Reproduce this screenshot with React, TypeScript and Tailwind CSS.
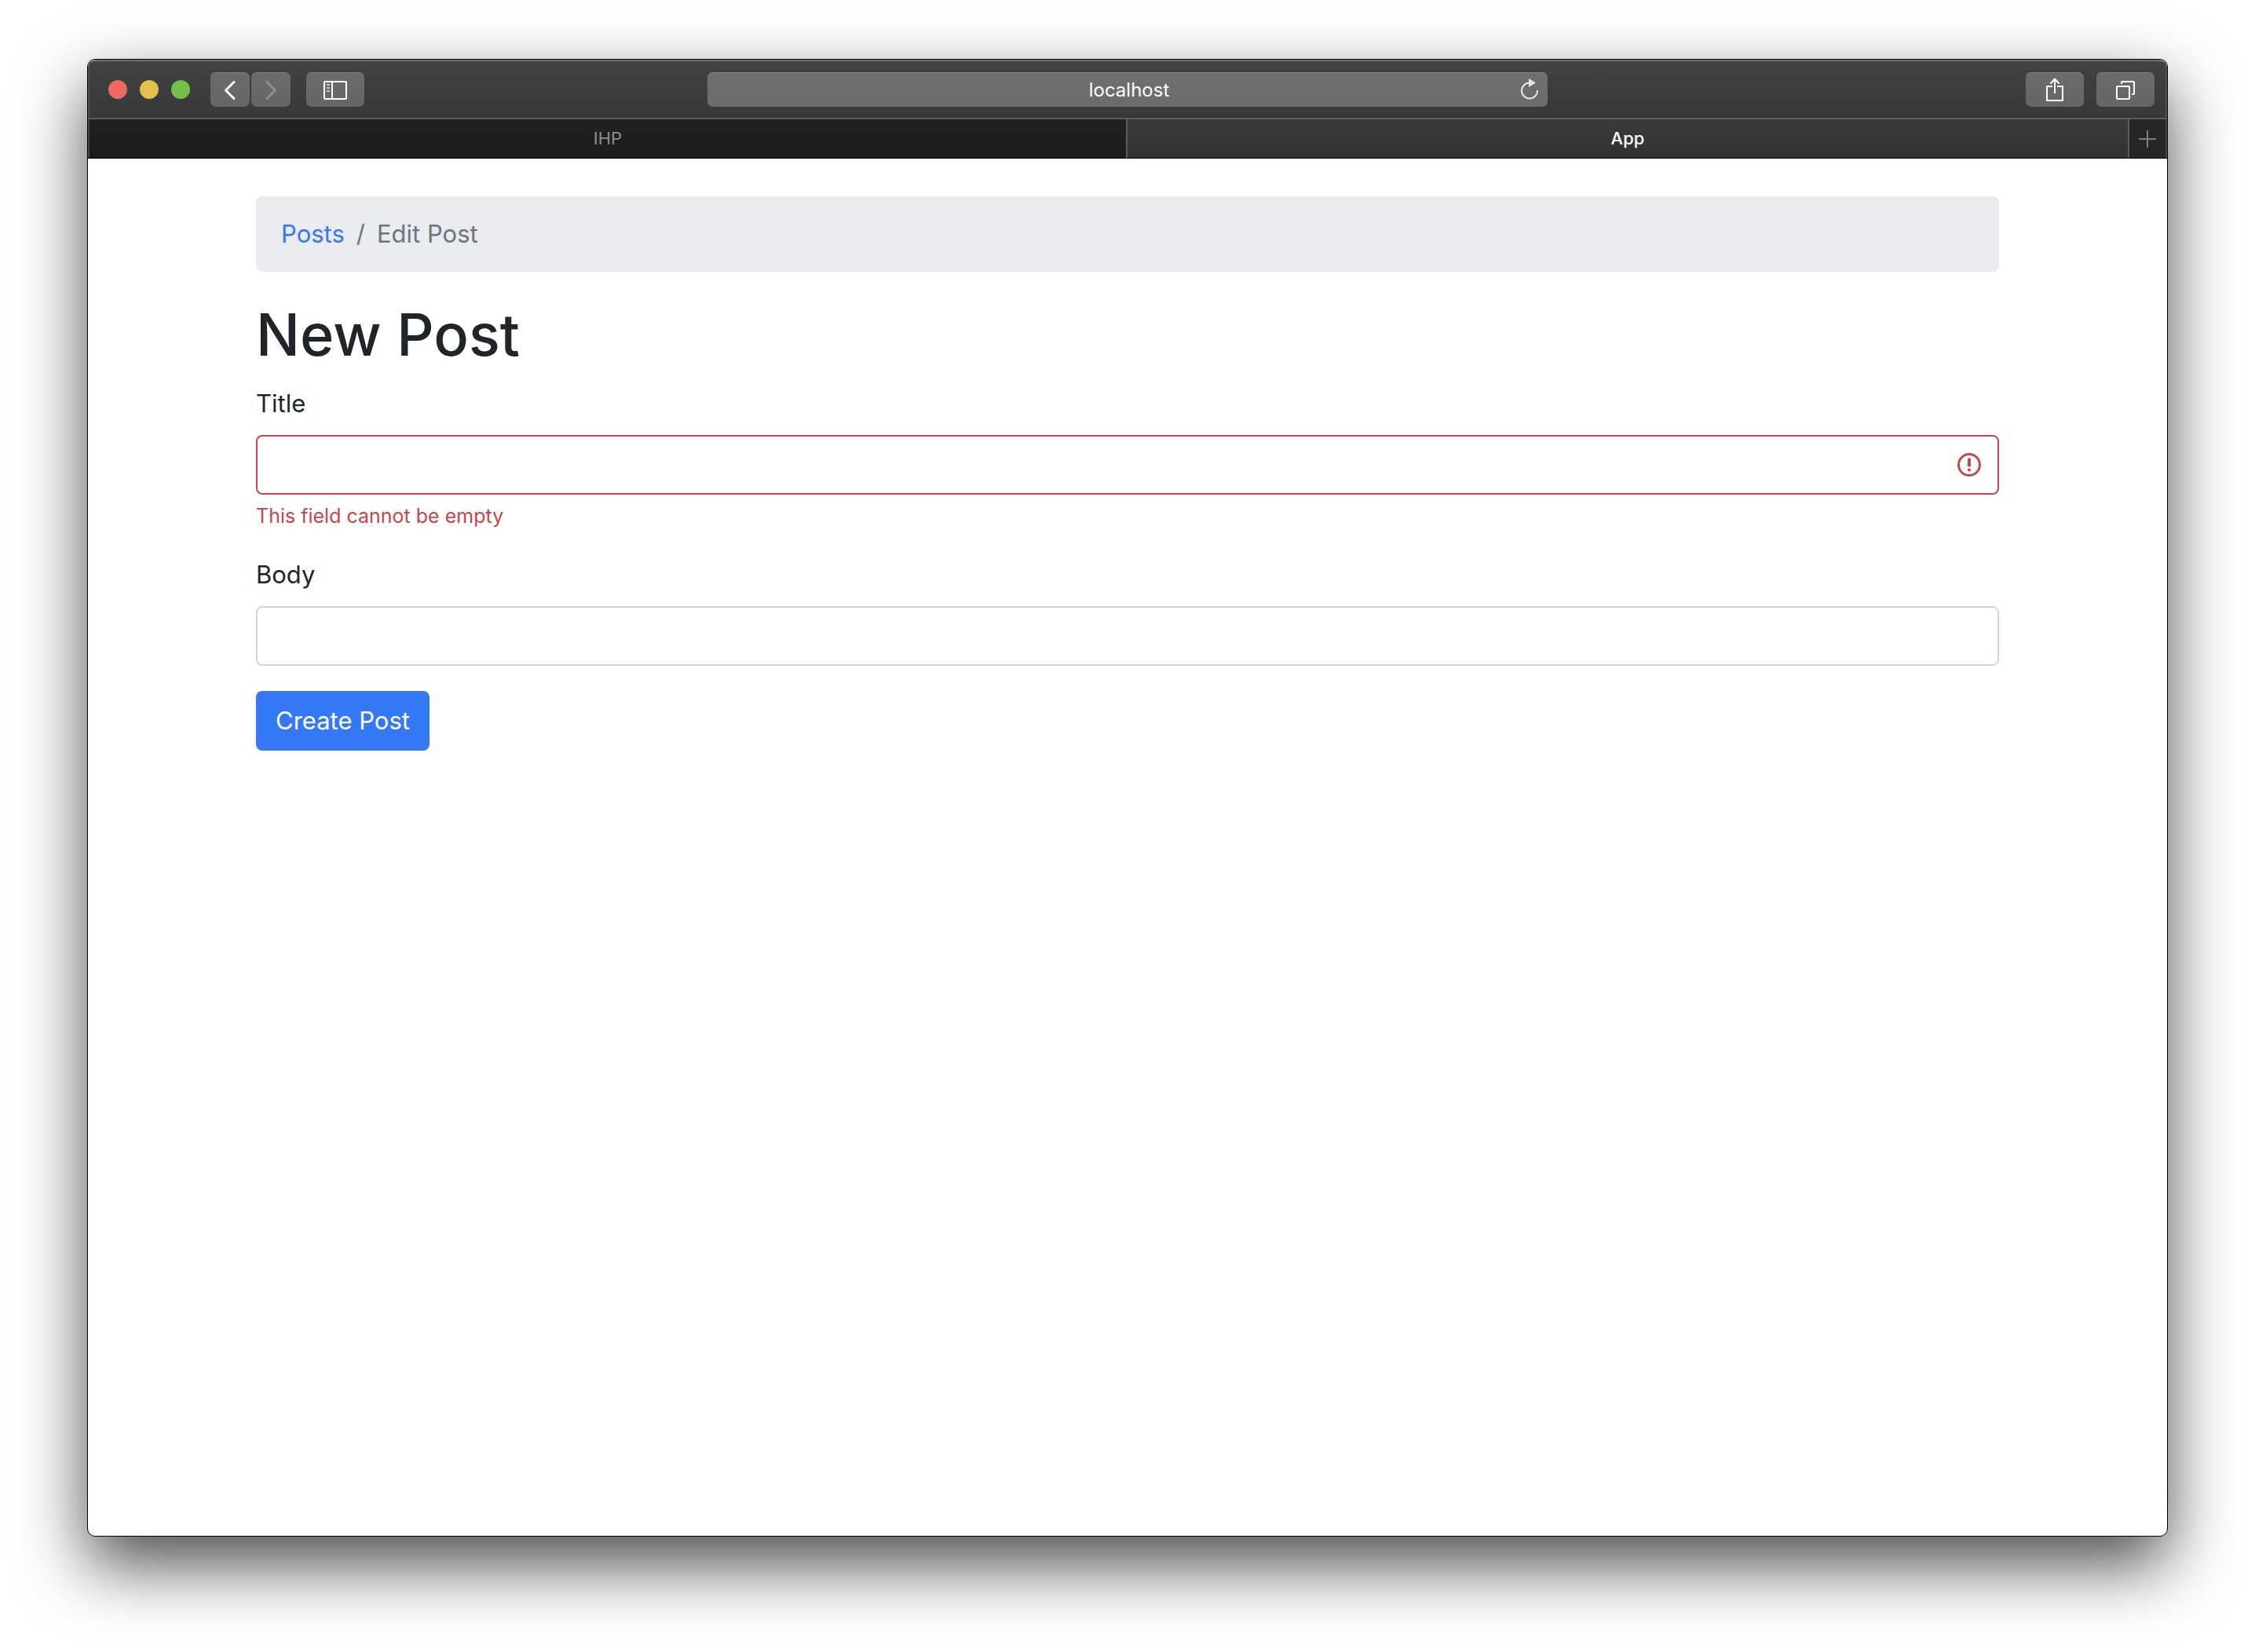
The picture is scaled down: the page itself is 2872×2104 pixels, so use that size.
import React from "react";

function ToolbarButton({
  label,
  className,
  disabled,
  children,
}: {
  label: string;
  className: string;
  disabled?: boolean;
  children: React.ReactNode;
}) {
  return (
    <button
      type="button"
      aria-label={label}
      disabled={disabled}
      className={`flex h-11 items-center justify-center rounded-[7px] border-t border-[#7f8081] bg-linear-to-b from-[#6b6c6e] to-[#646567] text-white ${className}`}
    >
      {children}
    </button>
  );
}

function Toolbar() {
  return (
    <header className="grid h-[76px] grid-cols-[787fr_1070fr_787fr] items-center rounded-t-[9px] border-2 border-x-[#505152] border-t-[#70716f] border-b-[#5a5b5b] bg-linear-to-b from-[#414243] to-[#373839]">
      <div className="flex items-center pl-6">
        <div className="flex gap-4">
          <button type="button" aria-label="Close" className="size-6 rounded-full bg-[#ee695e]" />
          <button type="button" aria-label="Minimize" className="size-6 rounded-full bg-[#e0c04e]" />
          <button type="button" aria-label="Zoom" className="size-6 rounded-full bg-[#74c04a]" />
        </div>
        <div className="ml-[26px] flex gap-0.5">
          <ToolbarButton label="Back" className="w-[50px]">
            <svg width="16" height="26" viewBox="0 0 16 26" fill="none" stroke="currentColor" strokeWidth="3" strokeLinecap="round" strokeLinejoin="round">
              <path d="M13 2.500 2.500 13 13 23.500" />
            </svg>
          </ToolbarButton>
          <ToolbarButton label="Forward" className="w-[50px]" disabled>
            <svg className="text-[#8f9091]" width="16" height="26" viewBox="0 0 16 26" fill="none" stroke="currentColor" strokeWidth="3" strokeLinecap="round" strokeLinejoin="round">
              <path d="M3 2.500 13.500 13 3 23.500" />
            </svg>
          </ToolbarButton>
        </div>
        <ToolbarButton label="Show sidebar" className="ml-5 w-[74px]">
          <svg width="30" height="24" viewBox="0 0 30 24" fill="none" stroke="currentColor" strokeWidth="2">
            <rect x="1" y="1" width="28" height="22" rx="1" />
            <path d="M11 1v22" />
            <path d="M4 5h4M4 9h4M4 13h4" strokeOpacity="0.65" />
          </svg>
        </ToolbarButton>
      </div>

      <div className="relative">
        <input
          type="text"
          aria-label="Address"
          defaultValue="localhost"
          className="h-11 w-full rounded-[7px] border-t border-[#858685] bg-linear-to-b from-[#6f706f] to-[#6a6b6b] pr-12 pl-[52px] text-center text-[24px] text-white outline-none"
        />
        <button type="button" aria-label="Reload" className="absolute inset-y-0 right-3 flex items-center text-[#e6e6e6]">
          <svg width="24" height="28" viewBox="0 0 24 28" fill="none" stroke="currentColor" strokeWidth="2">
            <path d="M13 5.500A10 10 0 1 0 23 15" />
            <path d="M12 0v11l9-5.500z" fill="currentColor" stroke="none" />
          </svg>
        </button>
      </div>

      <div className="flex justify-end gap-4 pr-3.5">
        <ToolbarButton label="Share" className="w-[74px] pb-0.5">
          <svg width="22" height="30" viewBox="0 0 22 30" fill="none" stroke="currentColor" strokeWidth="2" strokeLinejoin="round">
            <path d="M8 11H1v18h20V11h-7" />
            <path d="M11 20V2" />
            <path d="M5.500 7.500 11 1.500l5.500 6" />
          </svg>
        </ToolbarButton>
        <ToolbarButton label="Show all tabs" className="w-[74px]">
          <svg width="24" height="24" viewBox="0 0 24 24" fill="none" stroke="currentColor" strokeWidth="2">
            <rect x="1" y="7" width="16" height="16" rx="1" />
            <path d="M7 4V2a1 1 0 0 1 1-1h14a1 1 0 0 1 1 1v14a1 1 0 0 1-1 1h-2" />
          </svg>
        </ToolbarButton>
      </div>
    </header>
  );
}

function TabBar() {
  return (
    <div className="border-b border-black">
      <nav aria-label="Tabs" className="grid h-[49px] grid-cols-2 border-x-2 border-[#454646] text-[22px]">
        <button type="button" className="border-r-2 border-[#5a5b5b] bg-linear-to-b from-[#1f2120] to-[#1c1c1c] text-[#8e8f8e]">
          IHP
        </button>
        <div className="flex">
          <button type="button" aria-current="page" className="flex-1 bg-linear-to-b from-[#3a3b3c] to-[#313232] font-medium text-white">
            App
          </button>
          <button type="button" aria-label="New tab" className="flex w-12 items-center justify-center border-l-2 border-[#5a5b5b] bg-[#262626] text-[#7c7d7c]">
            <svg width="22" height="22" viewBox="0 0 22 22" fill="none" stroke="currentColor" strokeWidth="2">
              <path d="M11 0v22M0 11h22" />
            </svg>
          </button>
        </div>
      </nav>
    </div>
  );
}

function PostForm() {
  return (
    <form onSubmit={(e) => e.preventDefault()}>
      <div className="mb-8">
        <label htmlFor="title" className="mb-4 block">
          Title
        </label>
        <div className="relative">
          <input
            id="title"
            type="text"
            aria-invalid="true"
            aria-describedby="title-error"
            className="block h-[76px] w-full rounded-lg border-2 border-[#cb444a] bg-white px-6 pr-20 outline-none"
          />
          <svg className="pointer-events-none absolute inset-y-0 right-[22px] my-auto text-[#cb444a]" width="32" height="32" viewBox="0 0 32 32" fill="none" stroke="currentColor">
            <circle cx="16" cy="16" r="13.500" strokeWidth="3" />
            <path d="M16 9.300v7.500" strokeWidth="4" strokeLinecap="round" />
            <circle cx="16" cy="22.500" r="2" fill="currentColor" stroke="none" />
          </svg>
        </div>
        <p id="title-error" className="mt-2 text-[25px] leading-[38px] text-[#cb444a]">
          This field cannot be empty
        </p>
      </div>
      <div className="mb-8">
        <label htmlFor="body" className="mb-4 block">
          Body
        </label>
        <input id="body" type="text" className="block h-[76px] w-full rounded-lg border-2 border-[#ced4da] bg-white px-6 outline-none" />
      </div>
      <button type="submit" className="h-[76px] rounded-lg bg-[#3478f6] px-[25px] text-white">
        Create Post
      </button>
    </form>
  );
}

export default function App() {
  return (
    <div className="flex min-h-screen flex-col bg-white px-[111px] pt-[75px] pb-[147px] font-['Inter','Liberation_Sans',sans-serif]">
      <div className="flex flex-1 flex-col overflow-hidden rounded-[10px] border border-black bg-white shadow-[0_36px_86px_rgba(0,0,0,0.7)]">
        <Toolbar />
        <TabBar />
        <main className="mx-auto w-full max-w-[2220px] flex-1 pt-12 text-[31px] leading-[48px] text-[#212529]">
          <nav aria-label="Breadcrumb" className="mb-8 rounded-lg bg-[#e9ebef] px-8 py-6">
            <ol className="flex gap-[15px] text-[#6c757d]">
              <li>
                <a href="#posts" className="text-[#3478f6]">
                  Posts
                </a>
              </li>
              <li aria-hidden="true">/</li>
              <li aria-current="page">Edit Post</li>
            </ol>
          </nav>
          <h1 className="mb-4 text-[74px] leading-[96px] font-medium">New Post</h1>
          <PostForm />
        </main>
      </div>
    </div>
  );
}
